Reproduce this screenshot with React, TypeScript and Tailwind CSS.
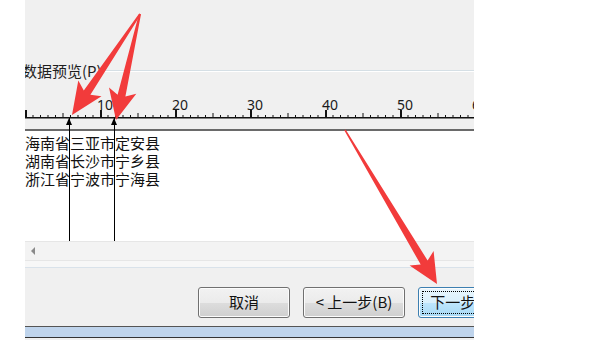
import React from "react";

const CJK = "font-['Noto_Sans_CJK_SC','Noto_Sans',sans-serif]";

const rows = ["海南省三亚市定安县", "湖南省长沙市宁乡县", "浙江省宁波市宁海县"];

function arrowPoints(x1: number, y1: number, x2: number, y2: number, tailW: number, neckW: number, headW: number, headL: number) {
  const dx = x2 - x1;
  const dy = y2 - y1;
  const len = Math.hypot(dx, dy);
  const ux = dx / len;
  const uy = dy / len;
  const nx = -uy;
  const ny = ux;
  const bx = x2 - ux * headL;
  const by = y2 - uy * headL;
  const nkx = bx + ux * 5;
  const nky = by + uy * 5;
  const pts = [
    [x1 + (nx * tailW) / 2, y1 + (ny * tailW) / 2],
    [nkx + (nx * neckW) / 2, nky + (ny * neckW) / 2],
    [bx + (nx * headW) / 2, by + (ny * headW) / 2],
    [x2, y2],
    [bx - (nx * headW) / 2, by - (ny * headW) / 2],
    [nkx - (nx * neckW) / 2, nky - (ny * neckW) / 2],
    [x1 - (nx * tailW) / 2, y1 - (ny * tailW) / 2],
  ];
  return pts.map((p) => p.map((v) => v.toFixed(1)).join(",")).join(" ");
}

function Ruler() {
  const ticks = Array.from({ length: 61 }, (_, n) => n);
  return (
    <svg width="449" height="28" className="block shrink-0">
      {ticks.map((n) => {
        const x = n * 7.5 + 0.5;
        const h = n % 10 === 0 ? 7 : n % 5 === 0 ? 4 : 2;
        return <rect key={n} x={x - 0.5} y={25 - h} width={n % 10 === 0 ? 2 : 1} height={h} fill="#111" />;
      })}
      <rect x="0" y="25" width="449" height="1.5" fill="#111" />
      {ticks
        .filter((n) => n > 0 && n % 10 === 0)
        .map((n) => (
          <text key={n} x={n * 7.5 - 3} y="18" fontSize="14" fill="#1a1a1a" fontFamily="'Noto Sans', sans-serif">
            {n}
          </text>
        ))}
    </svg>
  );
}

function Btn({ label, w, def }: { label: string; w: string; def?: boolean }) {
  return (
    <div
      className={`${w} relative flex h-[31px] shrink-0 items-center justify-center rounded-[3px] border ${
        def ? "border-[#3c7fb1] bg-[linear-gradient(#eaf6fd_0%,#d9f0fc_50%,#bee6fd_51%,#a7d9f5_100%)]" : "border-[#707070] bg-[linear-gradient(#f2f2f2_0%,#ebebeb_50%,#dddddd_51%,#cfcfcf_100%)]"
      } text-[15px] text-[#111] shadow-[inset_0_0_0_1px_#fcfcfc]`}
    >
      {def && <div className="absolute inset-[3px] border border-dotted border-black" />}
      <span className="relative">{label}</span>
    </div>
  );
}

export default function App() {
  return (
    <div className={`relative h-[348px] w-[606px] overflow-hidden bg-white ${CJK}`}>
      <div className="ml-[25px] flex h-[340px] w-[449px] flex-col overflow-hidden bg-[#f0f0f0]">
        <div className="h-[63px] shrink-0" />

        <div className="flex h-[16px] shrink-0 items-center">
          <span className="-ml-[3px] whitespace-nowrap text-[15px] leading-[16px] text-[#1e1e1e]">数据预览(P)</span>
          <div className="ml-[1px] h-[2px] flex-1 border-t border-[#d5dfe5] bg-white" />
        </div>

        <div className="h-[13px] shrink-0" />

        <div className="relative flex shrink-0 flex-col">
          <Ruler />
          <div className="h-[9px] bg-[#f0f0f0]" />
          <div className="h-[2px] bg-[#6a6a6a]" />
          <div className="h-[110px] bg-white pt-[3px]">
            {rows.map((r) => (
              <div key={r} className="whitespace-nowrap text-[15px] leading-[18px] text-[#111]">
                {r}
              </div>
            ))}
          </div>

          {[44, 89].map((x) => (
            <div key={x} className="absolute top-[26px] h-[123px] w-px bg-black" style={{ left: x }}>
              <div className="absolute -left-[3px] top-0 h-0 w-0 border-x-[3.5px] border-b-[7px] border-x-transparent border-b-black" />
            </div>
          ))}
        </div>

        <div className="flex h-[20px] shrink-0 items-center border-y border-[#e6e6e6] bg-[#f3f3f3] pl-[6px]">
          <div className="h-0 w-0 border-y-[4px] border-r-[4px] border-y-transparent border-r-[#8a8a8a]" />
        </div>
        <div className="h-[6px] shrink-0 bg-[#f7f7f7]" />
        <div className="h-px shrink-0 bg-[#d9e2ea]" />

        <div className="flex h-[58px] shrink-0 gap-[13px] pl-[173px] pt-[19px]">
          <Btn label="取消" w="w-[92px]" />
          <Btn label="< 上一步(B)" w="w-[102px]" />
          <Btn label="下一步(N) >" w="w-[102px]" def />
        </div>

        <div className="h-px shrink-0 bg-[#555]" />
        <div className="h-[10px] shrink-0 bg-[#bfd4ec]" />
        <div className="h-px shrink-0 bg-[#333]" />
      </div>

      <svg width="606" height="348" className="pointer-events-none absolute left-0 top-0">
        <polygon points={arrowPoints(140, 14, 72, 115, 2, 8, 28, 32)} fill="#f23b3b" />
        <polygon points={arrowPoints(140, 14, 116, 120, 2, 8, 28, 30)} fill="#f23b3b" />
        <polygon points={arrowPoints(345, 130, 437, 284, 1.5, 8, 28, 30)} fill="#f23b3b" />
      </svg>
    </div>
  );
}
